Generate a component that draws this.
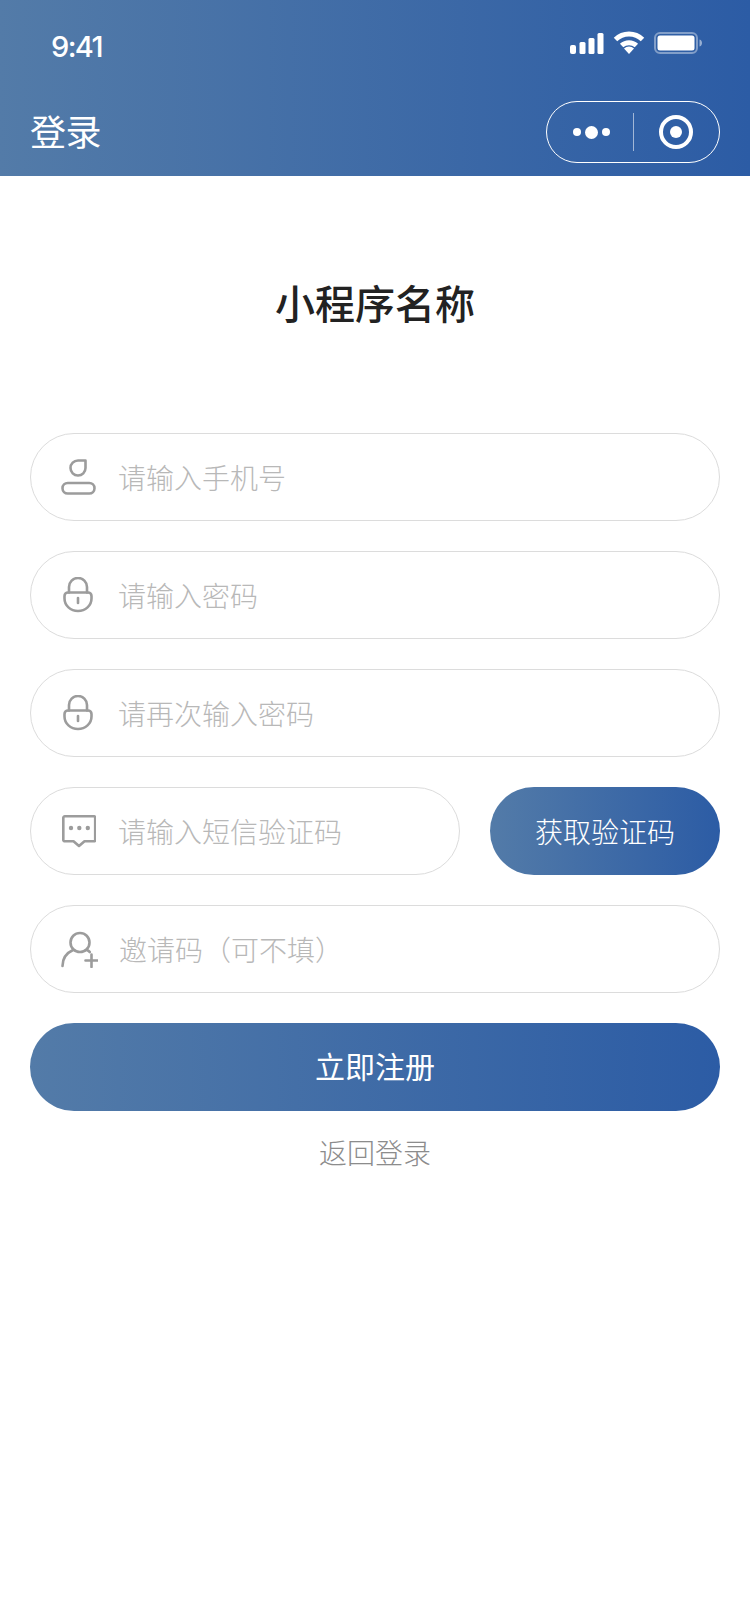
<div class="page">
  <header class="head">
    <div class="status">
      <span class="time">9:41</span>
      <div class="status-icons">
        <svg width="36" height="24" viewBox="0 0 36 24"><rect x="1" y="14" width="6" height="9" rx="2"/><rect x="10.500" y="11" width="6" height="12" rx="1.500"/><rect x="19.500" y="7" width="6" height="16" rx="1.500"/><rect x="28.500" y="2" width="6" height="21" rx="1.500"/></svg>
        <svg width="32" height="24" viewBox="0 0 32 24"><path d="M16 23l-5-5.400a7.200 7.200 0 0 1 10 0z"/><path d="M8.600 14.500a11 11 0 0 1 14.800 0" class="arc"/><path d="M2.500 8.500a19.500 19.500 0 0 1 27 0" class="arc"/></svg>
        <svg width="50" height="24" viewBox="0 0 50 24"><rect x="2" y="2" width="42" height="20" rx="5" class="shell"/><rect x="4.500" y="4.500" width="37" height="15" rx="2.500"/><path d="M46.500 8.500c2 .6 2.500 2 2.500 3.500s-.5 2.900-2.500 3.500z" opacity=".5"/></svg>
      </div>
    </div>
    <div class="nav">
      <span class="nav-title">登录</span>
      <div class="capsule">
        <div class="dots"><i></i><i class="big"></i><i></i></div>
        <span class="rule"></span>
        <div class="target"><i></i></div>
      </div>
    </div>
  </header>

  <main class="main">
    <h1>小程序名称</h1>
    <form class="form" onsubmit={(e) => e.preventDefault()}>
      <label class="field">
        <svg class="icon" width="36" height="36" viewBox="0 0 36 36"><path d="M18 1.500h7.500V9a7.500 7.500 0 1 1-15 0A7.500 7.500 0 0 1 18 1.500z"/><rect x="2.500" y="24" width="32" height="10.500" rx="5.250"/></svg>
        <span class="ph">请输入手机号</span>
      </label>
      <label class="field">
        <svg class="icon" width="36" height="36" viewBox="0 0 36 36"><path d="M9 15.500V10a9 9 0 0 1 18 0v5.500"/><path d="M4.500 19A3.500 3.500 0 0 1 8 15.500h20a3.500 3.500 0 0 1 3.500 3.500v2.500a13.500 12.500 0 0 1-27 0z"/><path d="M18 21v5"/></svg>
        <span class="ph">请输入密码</span>
      </label>
      <label class="field">
        <svg class="icon" width="36" height="36" viewBox="0 0 36 36"><path d="M9 15.500V10a9 9 0 0 1 18 0v5.500"/><path d="M4.500 19A3.500 3.500 0 0 1 8 15.500h20a3.500 3.500 0 0 1 3.500 3.500v2.500a13.500 12.500 0 0 1-27 0z"/><path d="M18 21v5"/></svg>
        <span class="ph">请再次输入密码</span>
      </label>
      <div class="code-row">
        <label class="field grow">
          <svg class="icon" width="36" height="36" viewBox="0 0 36 36"><path d="M5 3.300h29a1.500 1.500 0 0 1 1.200 1.500v22a1.500 1.500 0 0 1-1.500 1.500h-9.200L19 33l-5.500-4.700H5A1.500 1.500 0 0 1 3.300 27V4.800A1.500 1.500 0 0 1 5 3.300z"/><circle cx="11" cy="15" r="2.200" class="solid"/><circle cx="19.300" cy="15" r="2.200" class="solid"/><circle cx="27.800" cy="15" r="2.200" class="solid"/></svg>
          <span class="ph">请输入短信验证码</span>
        </label>
        <button class="get" type="button">获取验证码</button>
      </div>
      <label class="field">
        <svg class="icon" width="38" height="38" viewBox="0 0 38 38"><circle cx="20" cy="12.500" r="9.500"/><path d="M2.500 36c0-7.500 4-13 10.500-16"/><path d="M27 20c1 .5 2 1.200 2.800 2"/><path d="M25.500 30.500h12M31.500 24.500v12.500"/></svg>
        <span class="ph inv">邀请码（可不填）</span>
      </label>
      <button class="submit" type="submit">立即注册</button>
    </form>
    <a class="back" href="#back">返回登录</a>
  </main>
</div>

<style>
  :global(body) { margin: 0; background: #fff; }
  .page {
    width: 750px;
    min-height: 1624px;
    background: #fff;
    font-family: "Noto Sans CJK SC", "Noto Sans", sans-serif;
  }
  .head {
    height: 176px;
    box-sizing: border-box;
    background: linear-gradient(90deg, #537ba8, #2c5ca5);
    color: #fff;
    display: flex;
    flex-direction: column;
  }
  .status {
    height: 87px;
    box-sizing: border-box;
    padding: 30px 47px 0 51px;
    display: flex;
    justify-content: space-between;
    align-items: flex-start;
  }
  .time {
    font-family: Inter, "Open Sans", sans-serif;
    font-size: 29px;
    font-weight: 500;
    line-height: 34px;
    letter-spacing: -1.600px;
  }
  .status-icons { display: flex; gap: 8px; align-items: center; margin-top: 1px; }
  .status-icons svg { fill: #fff; display: block; }
  .status-icons .arc { fill: none; stroke: #fff; stroke-width: 5; }
  .status-icons .shell { fill: none; stroke: #fff; stroke-opacity: .4; stroke-width: 2; }
  .nav {
    padding: 14px 30px 0 30px;
    display: flex;
    justify-content: space-between;
    align-items: flex-start;
  }
  .nav-title { font-size: 36px; line-height: 58px; font-weight: 400; letter-spacing: -.5px; }
  .capsule {
    width: 174px;
    height: 62px;
    box-sizing: border-box;
    border: 1.500px solid #fff;
    border-radius: 31px;
    display: grid;
    grid-template-columns: 1fr 1px 1fr;
    align-items: center;
    justify-items: center;
  }
  .rule { width: 1px; height: 38px; background: rgba(255,255,255,.55); }
  .dots { display: flex; align-items: center; gap: 4px; margin-left: 4px; }
  .dots i { width: 8px; height: 8px; border-radius: 50%; background: #fff; }
  .dots i.big { width: 13px; height: 13px; }
  .target {
    width: 34px; height: 34px; box-sizing: border-box;
    border: 4px solid #fff; border-radius: 50%;
    display: flex; align-items: center; justify-content: center;
  }
  .target i { width: 12px; height: 12px; border-radius: 50%; background: #fff; }
  .main {
    padding: 0 30px;
    display: flex;
    flex-direction: column;
  }
  h1 {
    margin: 97px 0 0;
    height: 58px;
    font-size: 40px;
    line-height: 58px;
    font-weight: 500;
    color: #222;
    text-align: center;
  }
  .form {
    margin-top: 102px;
    display: flex;
    flex-direction: column;
    gap: 30px;
  }
  .field {
    height: 88px;
    box-sizing: border-box;
    border: 1px solid #dcdcdc;
    border-radius: 44px;
    padding-left: 29px;
    display: flex;
    align-items: center;
    background: #fff;
  }
  .grow { flex: 1; min-width: 0; }
  .icon { flex: none; display: block; fill: none; stroke: #9c9c9c; stroke-width: 2.600; stroke-linecap: round; stroke-linejoin: round; }
  .icon .solid { fill: #9c9c9c; stroke: none; }
  .ph {
    margin-left: 22px;
    font-size: 28px;
    line-height: 40px;
    font-weight: 200;
    color: #b8b8b8;
  }
  .ph.inv { margin-left: 21px; }
  .code-row { display: flex; gap: 30px; }
  .get, .submit {
    border: 0;
    font-family: inherit;
    color: #fff;
    background: linear-gradient(90deg, #537ba8, #2c5ca5);
    padding: 0;
    font-weight: 300;
  }
  .get {
    flex: none;
    width: 230px;
    height: 88px;
    border-radius: 44px;
    font-size: 28px;
  }
  .submit {
    height: 88px;
    border-radius: 44px;
    font-size: 30px;
    padding-bottom: 4px;
    font-weight: 400;
  }
  .back {
    margin-top: 21px;
    text-align: center;
    font-size: 28px;
    line-height: 40px;
    font-weight: 300;
    color: #8c8c8c;
    text-decoration: none;
  }
</style>
